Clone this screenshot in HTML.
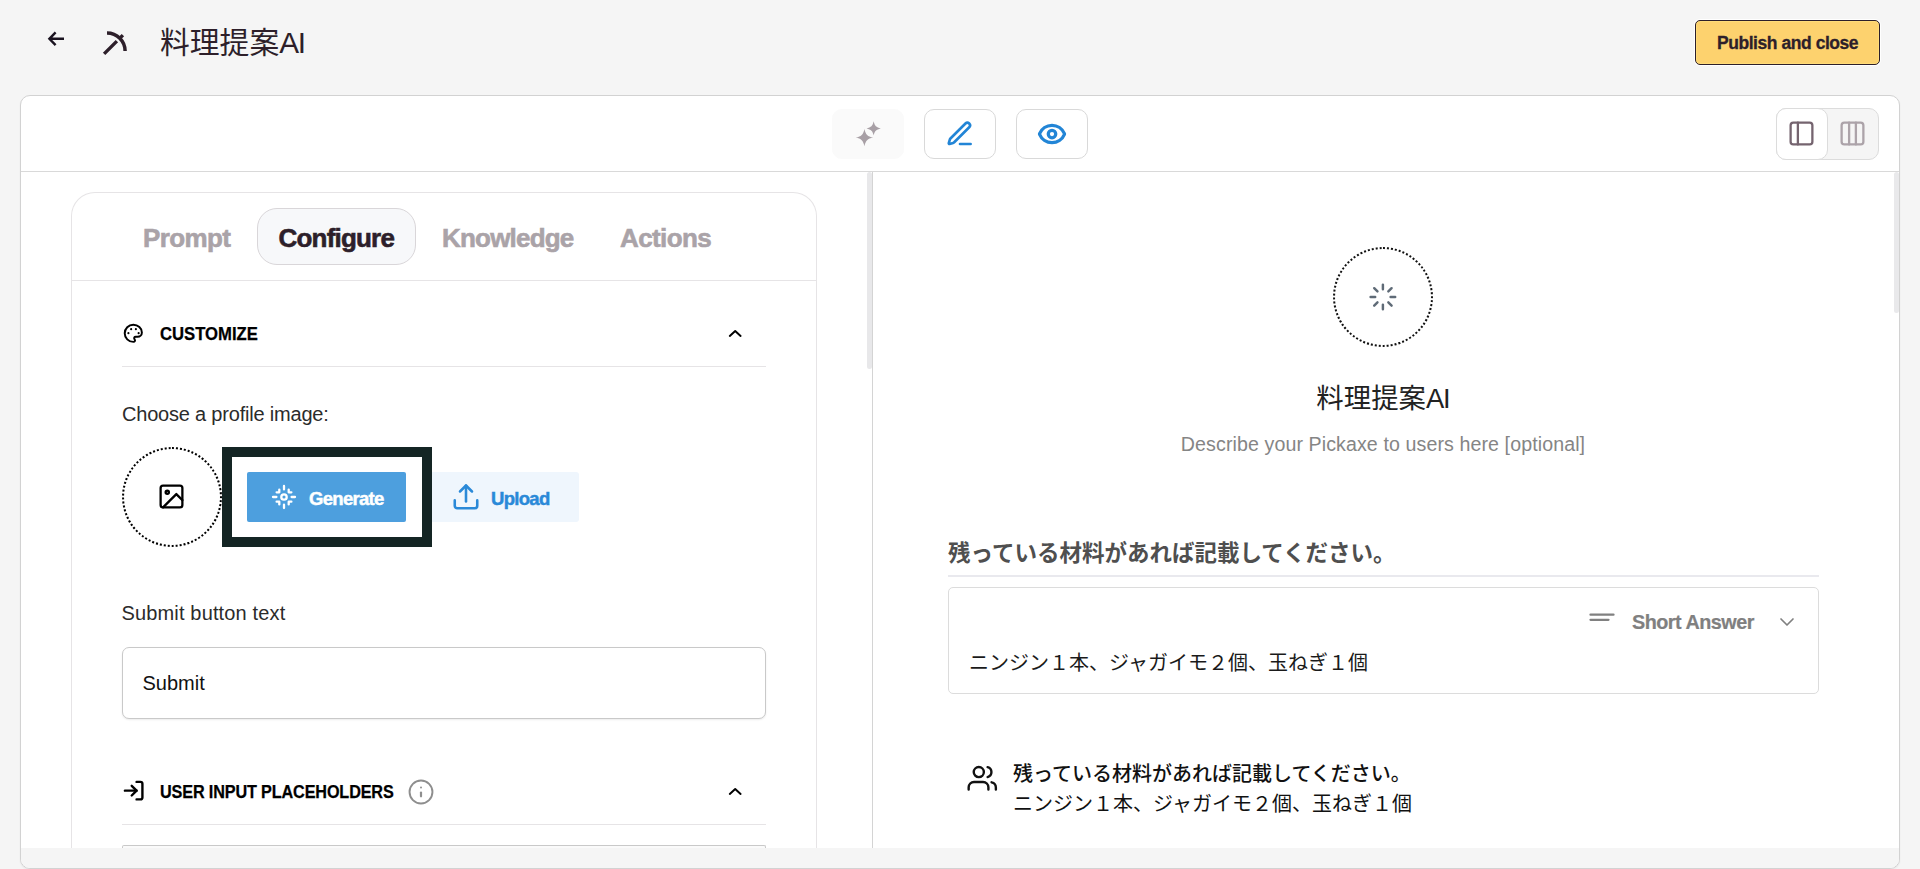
<!DOCTYPE html>
<html lang="ja">
<head>
<meta charset="utf-8">
<title>料理提案AI</title>
<style>
*{box-sizing:border-box;margin:0;padding:0}
html,body{width:1920px;height:869px;overflow:hidden;background:#f5f5f5}
body{font-family:"Liberation Sans","Noto Sans CJK JP",sans-serif;color:#2d1f2a;position:relative}
.abs{position:absolute}
.t{position:absolute;white-space:nowrap;line-height:1}
svg{display:block;position:absolute;overflow:visible}
#main{left:20px;top:95px;width:1880px;height:774px;background:#fff;border:1px solid #d2d2d2;border-radius:10px;box-shadow:0 1px 2px rgba(0,0,0,.06)}
#strip{left:21px;top:848px;width:1878px;height:20px;background:#f5f5f5;border-radius:0 0 9px 9px}
#tbline{left:21px;top:171px;width:1878px;height:1px;background:#d9d9d9}
.tb{position:absolute;top:109px;width:72px;height:50px;border-radius:10px;border:1px solid #d9d9d9;background:#fff}
#publish{left:1695px;top:20px;width:185px;height:45px;background:#fdd26e;border:1px solid #2d1f2a;border-radius:5px;box-shadow:0 0 0 1px #fff,inset 0 0 0 1px #ffdc79}
.tab{top:224.500px;font-size:26px;font-weight:700;letter-spacing:-.6px;-webkit-text-stroke:.6px currentColor}
.sec{font-size:17.500px;font-weight:700;color:#000;letter-spacing:-.6px;-webkit-text-stroke:.25px currentColor}
.lbl{font-size:19px;color:#2b2b2b}
.btn{font-size:18.500px;font-weight:700;letter-spacing:-.7px;-webkit-text-stroke:.45px currentColor}
.jp{font-family:"Liberation Sans","Noto Sans CJK JP",sans-serif}
</style>
</head>
<body>
<!-- header -->
<svg class="abs" style="left:40px;top:20px" width="100" height="45" viewBox="40 20 100 45" fill="none" stroke-linecap="butt" stroke-linejoin="miter"><path d="M64 38.800H50M55.600 32.400L49.400 38.800l6.200 6.400" stroke="#1a1320" stroke-width="2.400"/><path d="M107 32.900A18.100 18.100 0 0 1 125.100 51" stroke="#2d1f2a" stroke-width="3.500"/><path d="M104.100 53.900L116.900 41.100M119.300 38.700L122.900 35.100" stroke="#2d1f2a" stroke-width="3.400"/></svg>
<div class="t" id="title" style="left:160px;top:28px;font-size:29.800px;color:#2d1f2a">料理提案<span style="letter-spacing:-1.200px">AI</span></div>
<div class="abs" id="publish"></div>
<div class="t" id="publishT" style="left:1717px;top:35px;font-size:17.500px;font-weight:700;color:#2d1f2a;letter-spacing:-.45px;-webkit-text-stroke:.3px currentColor">Publish and close</div>

<!-- main container -->
<div class="abs" id="main"></div>
<div class="abs" id="tbline"></div>

<!-- toolbar -->
<div class="tb" style="left:832px;background:#fafafa;border-color:#fafafa"></div>
<svg style="left:855px;top:120px" width="28" height="28" viewBox="0 0 28 28" fill="#a8a0a6"><path d="M9.45 8.90c1.22 5.57 3.13 7.48 8.70 8.70c-5.57 1.22 -7.48 3.13 -8.70 8.70c-1.22 -5.57 -3.13 -7.48 -8.70 -8.70c5.57 -1.22 7.48 -3.13 8.70 -8.70z"/><path d="M18.66 1.30c0.99 4.54 2.56 6.11 7.10 7.10c-4.54 0.99 -6.11 2.56 -7.10 7.10c-0.99 -4.54 -2.56 -6.11 -7.10 -7.10c4.54 -0.99 6.11 -2.56 7.10 -7.10z"/></svg>
<div class="tb" style="left:924px"></div>
<svg style="left:945px;top:119px" width="30" height="30" viewBox="0 0 24 24" fill="none" stroke="#2285d6" stroke-width="2.1" stroke-linecap="round" stroke-linejoin="round"><path d="M12 20h8.500"/><path d="M16.376 3.622a1 1 0 0 1 3.002 3.002L7.368 18.635a2 2 0 0 1-.855.506l-2.872.838a.5.5 0 0 1-.62-.62l.838-2.872a2 2 0 0 1 .506-.854z"/></svg>
<div class="tb" style="left:1016px"></div>
<svg style="left:1037px;top:119px" width="30" height="30" viewBox="0 0 24 24" fill="none" stroke="#2285d6" stroke-width="2.600" stroke-linecap="round" stroke-linejoin="round"><path d="M2.062 12.348a1 1 0 0 1 0-.696 10.750 10.750 0 0 1 19.876 0 1 1 0 0 1 0 .696 10.750 10.750 0 0 1-19.876 0"/><circle cx="12" cy="12" r="3"/></svg>
<!-- layout toggle -->
<div class="abs" style="left:1776px;top:108px;width:103px;height:52px;border:1px solid #dcdcdc;border-radius:10px;background:#f5f5f5"></div>
<div class="abs" style="left:1776px;top:108px;width:52px;height:52px;border:1px solid #dcdcdc;border-radius:10px;background:#fff"></div>
<svg style="left:1787px;top:119px" width="29" height="29" viewBox="0 0 24 24" fill="none" stroke="#75646f" stroke-width="1.900" stroke-linecap="round" stroke-linejoin="round"><rect x="3" y="3" width="18" height="18" rx="2.200"/><path d="M9 3v18"/></svg>
<svg style="left:1838px;top:119px" width="29" height="29" viewBox="0 0 24 24" fill="none" stroke="#aca3a9" stroke-width="1.900" stroke-linecap="round" stroke-linejoin="round"><rect x="3" y="3" width="18" height="18" rx="2.200"/><path d="M9.200 3v18M14.800 3v18"/></svg>
<!-- splitters / scrollbars -->
<div class="abs" style="left:872px;top:172px;width:1px;height:676px;background:#d4d4d4"></div>
<div class="abs" style="left:867px;top:172px;width:5px;height:197px;border-radius:3px;background:#e8e8ea"></div>
<div class="abs" style="left:1894px;top:172px;width:5px;height:141px;border-radius:3px;background:#e9e9eb"></div>

<!-- LEFT CARD -->
<div class="abs" style="left:71px;top:192px;width:746px;height:664px;border:1px solid #e6e4e6;border-bottom:none;border-radius:24px 24px 0 0;background:#fff"></div>
<div class="abs" style="left:72px;top:280px;width:744px;height:1px;background:#e6e4e6"></div>
<div class="abs" style="left:257px;top:208px;width:159px;height:57px;border:1px solid #d9d6d9;border-radius:20px;background:#f7f8fa"></div>
<div class="t tab" id="tab1" style="left:143px;color:#aaa3a8">Prompt</div>
<div class="t tab" id="tab2" style="left:278.500px;letter-spacing:-.8px;color:#2d1f2a">Configure</div>
<div class="t tab" id="tab3" style="left:442px;letter-spacing:-.8px;color:#aaa3a8">Knowledge</div>
<div class="t tab" id="tab4" style="left:620px;color:#aaa3a8">Actions</div>
<!-- CUSTOMIZE -->
<svg style="left:123px;top:323.200px" width="20.600" height="20.600" viewBox="0 0 24 24" fill="none" stroke="#000" stroke-width="2.300" stroke-linecap="round" stroke-linejoin="round"><path d="M12 22a1 1 0 0 1 0-20 10 9 0 0 1 10 9 5 5 0 0 1-5 5h-2.250a1.750 1.750 0 0 0-1.400 2.800l.3.400a1.750 1.750 0 0 1-1.400 2.800z"/><g fill="#000" stroke="none"><circle cx="9.500" cy="7.200" r="1.250"/><circle cx="15" cy="7.200" r="1.250"/><circle cx="6.300" cy="11.800" r="1.250"/><circle cx="18.200" cy="11.800" r="1.250"/></g></svg>
<div class="t sec" id="sec1" style="left:160px;top:326px;letter-spacing:0;transform-origin:0 50%;transform:scaleX(.953)">CUSTOMIZE</div>
<svg style="left:727px;top:325px" width="16" height="16" viewBox="0 0 16 16" fill="none" stroke="#000" stroke-width="2" stroke-linecap="round" stroke-linejoin="round"><path d="M2.800 10.900L8.200 6.100l5.400 4.800"/></svg>
<div class="abs" style="left:122px;top:366px;width:644px;height:1px;background:#e6e4e6"></div>
<div class="t lbl" id="lbl1" style="left:122px;top:404px;font-size:20px;letter-spacing:-.2px">Choose a profile image:</div>
<div class="abs" style="left:122px;top:447px;width:100px;height:100px;border:2px dotted #000;border-radius:50%"></div>
<svg style="left:157.400px;top:482.400px" width="29" height="29" viewBox="0 0 24 24" fill="none" stroke="#000" stroke-width="1.900" stroke-linecap="round" stroke-linejoin="round"><rect x="3" y="3" width="18" height="18" rx="2"/><circle cx="8.500" cy="8.500" r="1.350"/><path d="M21 15l-5-5L5 21"/></svg>
<div class="abs" style="left:222px;top:447px;width:209.500px;height:100px;border:10px solid #142524;background:#fff"></div>
<div class="abs" style="left:247px;top:472px;width:159px;height:50px;background:#4d9fde;border-radius:2px"></div>
<svg style="left:270px;top:483px" width="28" height="28" viewBox="0 0 28 28" fill="none" stroke="#fff" stroke-width="2.300" stroke-linecap="round" stroke-linejoin="round"><circle cx="14" cy="14" r="2.700"/><path d="M14.00 6.40L14.00 3.00M14.00 21.60L14.00 25.00M6.40 14.00L3.00 14.00M21.60 14.00L25.00 14.00M6.60 9.30L9.30 9.30L9.30 6.60M21.40 9.30L18.70 9.30L18.70 6.60M6.60 18.70L9.30 18.70L9.30 21.40M21.40 18.70L18.70 18.70L18.70 21.40"/></svg>
<div class="t btn" id="gen" style="left:309px;top:489.600px;color:#fff">Generate</div>
<div class="abs" style="left:431.500px;top:472px;width:147.500px;height:50px;background:#eff6fd;border-radius:0 3px 3px 0"></div>
<svg style="left:451px;top:482px" width="30" height="30" viewBox="0 0 24 24" fill="none" stroke="#2a89d8" stroke-width="2.050" stroke-linecap="round" stroke-linejoin="round"><path d="M21 14.700v4.300a2 2 0 0 1-2 2H5a2 2 0 0 1-2-2v-4.300"/><path d="M16.800 7.600l-4.800-4.800-4.800 4.800"/><path d="M12 2.800v12.700"/></svg>
<div class="t btn" id="upl" style="left:491px;top:489.700px;color:#2a89d8">Upload</div>
<div class="t lbl" id="lbl2" style="left:121.500px;top:602.500px;font-size:20px;letter-spacing:.15px">Submit button text</div>
<div class="abs" style="left:122px;top:647px;width:644px;height:72px;border:1px solid #c9c9c9;border-radius:7px;background:#fff;box-shadow:0 1px 2px rgba(0,0,0,.08)"></div>
<div class="t lbl" id="inp" style="left:142.500px;top:672.500px;font-size:20px;color:#111">Submit</div>
<!-- USER INPUT PLACEHOLDERS -->
<svg style="left:121.500px;top:779.300px" width="23.330" height="23.330" viewBox="0 0 24 24" fill="none" stroke="#000" stroke-width="2.450" stroke-linecap="round" stroke-linejoin="round"><path d="M15 3h4a2 2 0 0 1 2 2v14a2 2 0 0 1-2 2h-4"/><path d="M10 17l5-5-5-5"/><path d="M15 12H3"/></svg>
<div class="t sec" id="sec2" style="left:159.500px;top:784px;letter-spacing:-.15px;transform-origin:0 50%;transform:scaleX(.926)">USER INPUT PLACEHOLDERS</div>
<svg style="left:408px;top:778.800px" width="26" height="26" viewBox="0 0 26 26" fill="none" stroke="#8e8e8e" stroke-width="1.900" stroke-linecap="round"><circle cx="13" cy="13" r="11.450"/><path d="M13 13.500v3.800" stroke-width="2.200"/><circle cx="13" cy="8.500" r="1" fill="#8e8e8e" stroke="none"/></svg>
<svg style="left:727px;top:782.500px" width="16" height="16" viewBox="0 0 16 16" fill="none" stroke="#000" stroke-width="2" stroke-linecap="round" stroke-linejoin="round"><path d="M2.800 10.900L8.200 6.100l5.400 4.800"/></svg>
<div class="abs" style="left:122px;top:824px;width:644px;height:1px;background:#e6e4e6"></div>
<div class="abs" style="left:122px;top:845px;width:644px;height:12px;border:1px solid #c9c9c9;border-bottom:none;border-radius:2px 2px 0 0;background:#fafafa"></div>

<!-- RIGHT PANE -->
<div class="abs" style="left:1333px;top:247px;width:100px;height:100px;border:2px dotted #111;border-radius:50%"></div>
<svg style="left:1368px;top:282px" width="30" height="30" viewBox="0 0 30 30" fill="none" stroke="#5f6b77" stroke-width="2.450" stroke-linecap="round"><path d="M14.90 7.20L14.90 2.60M20.34 9.46L23.60 6.20M22.60 14.90L27.20 14.90M20.34 20.34L23.60 23.60M14.90 22.60L14.90 27.20M9.46 20.34L6.20 23.60M7.20 14.90L2.60 14.90M9.46 9.46L6.20 6.20"/></svg>
<div class="t" id="rtitle" style="left:1183px;width:400px;text-align:center;top:385px;font-size:27.400px;color:#222">料理提案<span style="letter-spacing:-1.100px">AI</span></div>
<div class="t" id="rdesc" style="left:1083px;width:600px;text-align:center;top:435px;font-size:19.600px;letter-spacing:.1px;color:#858585">Describe your Pickaxe to users here [optional]</div>
<div class="t" id="q1" style="left:948px;top:543px;font-size:22.500px;font-weight:700;color:#4f4f4f;font-family:'Liberation Sans','Noto Sans CJK JP',sans-serif">残っている材料があれば記載してください。</div>
<div class="abs" style="left:948px;top:575px;width:871px;height:2px;background:#e9e9ee"></div>
<div class="abs" style="left:948px;top:587px;width:871px;height:107px;border:1px solid #dcdcdc;border-radius:5px;background:#fff"></div>
<svg style="left:1589px;top:611px" width="26" height="12" viewBox="0 0 26 12" fill="none" stroke="#808080" stroke-width="2.300" stroke-linecap="round"><path d="M1.500 3.700h23M1.500 8.800h18"/></svg>
<div class="t" id="sa" style="left:1632px;top:613px;font-size:19.800px;font-weight:700;color:#808080;letter-spacing:-.5px;-webkit-text-stroke:.2px currentColor">Short Answer</div>
<svg style="left:1779px;top:616px" width="16" height="12" viewBox="0 0 16 12" fill="none" stroke="#808080" stroke-width="1.700" stroke-linecap="round" stroke-linejoin="round"><path d="M2 3l6 6 6-6"/></svg>
<div class="t jp" id="a1" style="left:969px;top:653px;font-size:20px;color:#1a1a1a">ニンジン１本、ジャガイモ２個、玉ねぎ１個</div>
<svg style="left:966.300px;top:762.700px" width="32" height="32" viewBox="0 0 24 24" fill="none" stroke="#111" stroke-width="1.800" stroke-linecap="round" stroke-linejoin="round"><path d="M16.800 19.900v-1.700a4 4 0 0 0-4-4H6a4 4 0 0 0-4 4v1.700"/><circle cx="9.600" cy="6.800" r="3.800"/><path d="M22.400 19.900v-1.500a4 4 0 0 0-3.200-3.900"/><path d="M16.200 3.100a3.850 3.850 0 0 1 0 7.450"/></svg>
<div class="t jp" id="u1" style="left:1013px;top:763.500px;font-size:20px;font-weight:500;color:#111">残っている材料があれば記載してください。</div>
<div class="t jp" id="u2" style="left:1013px;top:793.500px;font-size:20px;color:#111">ニンジン１本、ジャガイモ２個、玉ねぎ１個</div>


<div class="abs" id="strip"></div>
</body>
</html>
